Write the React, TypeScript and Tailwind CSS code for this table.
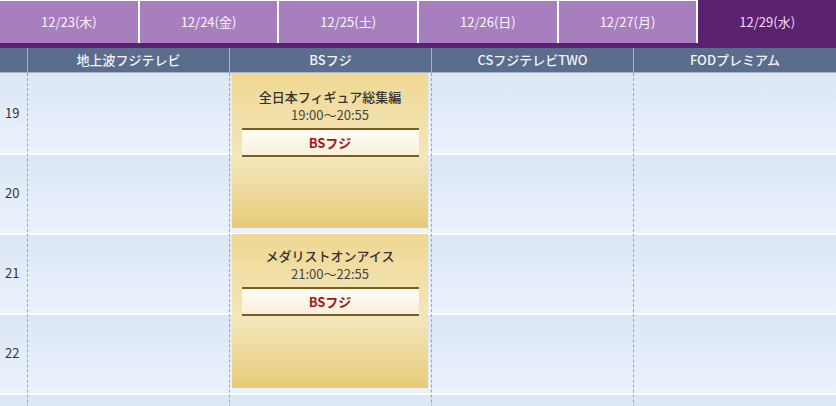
const tabs = ['12/23(木)', '12/24(金)', '12/25(土)', '12/26(日)', '12/27(月)', '12/29(水)']
const channels = ['地上波フジテレビ', 'BSフジ', 'CSフジテレビTWO', 'FODプレミアム']
const hours = ['19', '20', '21', '22', '']

function ProgramCard({ title, time, className }: { title: string; time: string; className: string }) {
  return (
    <div
      className={`mx-[2px] mr-[3px] flex flex-col items-center bg-[linear-gradient(#efd893,#f4e6bb_55%,#e8cb78)] ${className}`}
    >
      <div className="text-[13px] leading-[19px] font-medium text-[#333]">{title}</div>
      <div className="-mt-px text-[13px] leading-[19px] text-[#444]">{time}</div>
      <div className="mt-[4px] flex h-[29px] w-[177px] items-center justify-center border-y-2 border-[#7c5d22] bg-[linear-gradient(#fffdf6,#f8f0d9)] text-[13px] font-bold text-[#a3181c]">
        BSフジ
      </div>
    </div>
  )
}

export default function App() {
  return (
    <div className="h-[406px] w-[836px] overflow-hidden bg-white font-['Noto_Sans_CJK_JP',sans-serif]">
      {/* Date tabs */}
      <div className="flex h-[43px] gap-[2px] bg-white">
        {tabs.map((t, i) =>
          i === tabs.length - 1 ? (
            <div key={t} className="flex flex-1 items-center justify-center bg-[#5b2272] text-[13px] text-[#f3dcf3]">
              {t}
            </div>
          ) : (
            <div key={t} className="mt-px flex flex-1 items-center justify-center bg-[#a77fbf] text-[13px] text-[#fbf4fb]">
              {t}
            </div>
          ),
        )}
      </div>
      <div className="h-[5px] bg-[#5b2272]" />

      {/* Channel header */}
      <div className="grid h-[25px] grid-cols-[28px_1fr_1fr_1fr_1fr] border-b border-[#aab4c2] bg-[#5a6d8d]">
        <div className="border-r border-[#a6b3c6]" />
        {channels.map((c, i) => (
          <div
            key={c}
            className={`flex items-center justify-center text-[13px] font-medium text-[#f2f4f8] ${i < 3 ? 'border-r border-[#a6b3c6]' : ''}`}
          >
            {c}
          </div>
        ))}
      </div>

      {/* Timetable body */}
      <div className="relative">
        <div className="flex flex-col">
          {hours.map((h, i) => (
            <div
              key={i}
              className={`h-[80px] bg-[linear-gradient(#dce7f5,#eaf2fc)] ${i > 0 ? 'border-t-2 border-white' : ''}`}
            />
          ))}
        </div>
        <div className="absolute inset-0 grid grid-cols-[28px_1fr_1fr_1fr_1fr]">
          <div className="flex flex-col border-r border-dashed border-[#9aa6b6]">
            {hours.map((h, i) => (
              <div key={i} className="flex h-[80px] shrink-0 items-center pl-[5px] text-[13px] text-[#333]">
                {h}
              </div>
            ))}
          </div>
          <div className="border-r border-dashed border-[#9aa6b6]" />
          <div className="flex flex-col border-r border-dashed border-[#9aa6b6]">
            <ProgramCard title="全日本フィギュア総集編" time="19:00〜20:55" className="h-[155px] pt-[14px]" />
            <ProgramCard title="メダリストオンアイス" time="21:00〜22:55" className="mt-[6px] h-[154px] pt-[12px]" />
          </div>
          <div className="border-r border-dashed border-[#9aa6b6]" />
          <div />
        </div>
      </div>
    </div>
  )
}
